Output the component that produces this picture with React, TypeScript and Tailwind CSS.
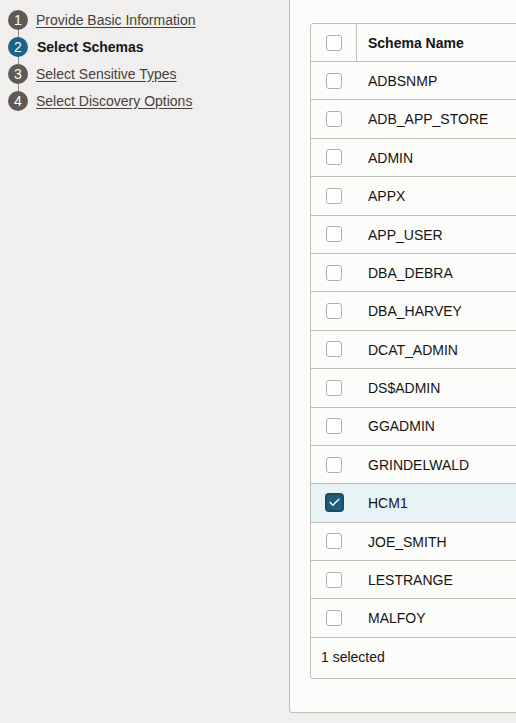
import { Check } from 'lucide-react';

const steps = [
  { n: 1, label: 'Provide Basic Information', active: false },
  { n: 2, label: 'Select Schemas', active: true },
  { n: 3, label: 'Select Sensitive Types', active: false },
  { n: 4, label: 'Select Discovery Options', active: false },
];

const schemas = [
  'ADBSNMP',
  'ADB_APP_STORE',
  'ADMIN',
  'APPX',
  'APP_USER',
  'DBA_DEBRA',
  'DBA_HARVEY',
  'DCAT_ADMIN',
  'DS$ADMIN',
  'GGADMIN',
  'GRINDELWALD',
  'HCM1',
  'JOE_SMITH',
  'LESTRANGE',
  'MALFOY',
];

const selected = ['HCM1'];

function Box({ checked }: { checked: boolean }) {
  if (checked) {
    return (
      <div className="w-[19px] h-[19px] -ml-[1.5px] rounded-[4px] bg-[#1e5f7f] border-2 border-[#174a63] flex items-center justify-center">
        <Check className="w-[13px] h-[13px] text-white" strokeWidth={2.5} />
      </div>
    );
  }
  return <div className="w-[16px] h-[16px] rounded-[3px] border border-[#b3aea8] bg-white" />;
}

export default function App() {
  return (
    <div
      className="flex h-[723px] w-[516px] overflow-hidden bg-[#f1efed] text-[14px] text-[#161513]"
      style={{ fontFamily: '"Liberation Sans", Arial, sans-serif' }}
    >
      <div className="w-[289px] shrink-0 pt-[6.5px] relative">
        <div className="absolute left-[17.5px] top-[20px] h-[81px] w-px bg-[#8e8984]" />
        {steps.map((s) => (
          <div key={s.n} className="relative flex items-center h-[27px] pl-[8px]">
            <div
              className={`w-[20px] h-[20px] rounded-full flex items-center justify-center text-white text-[14px] ${
                s.active ? 'bg-[#1a6487]' : 'bg-[#5f5a55]'
              }`}
            >
              {s.n}
            </div>
            {s.active ? (
              <span className="ml-[9px] font-bold text-[#161513]">{s.label}</span>
            ) : (
              <span className="ml-[8px] underline underline-offset-2 text-[#46413c]">{s.label}</span>
            )}
          </div>
        ))}
      </div>

      <div className="shrink-0 w-[300px] h-[713px] bg-[#fcfcfb] border-l border-b border-[#c3bfba] rounded-bl-[3px] pl-[20px] pt-[23px]">
        <div className="w-[300px] border border-[#c3bfba] rounded-[3px] bg-[#fcfcfb]">
          <div className="flex h-[38px] border-b border-[#c3bfba]">
            <div className="w-[46px] shrink-0 border-r border-[#c3bfba] flex items-center pl-[15px]">
              <Box checked={false} />
            </div>
            <div className="flex items-center pl-[11px] pt-px font-bold">Schema Name</div>
          </div>
          {schemas.map((name) => {
            const on = selected.includes(name);
            return (
              <div
                key={name}
                className={`flex h-[38.4px] border-b border-[#c3bfba] ${on ? 'bg-[#e7f2f5]' : ''}`}
              >
                <div className="w-[47px] shrink-0 flex items-center pl-[15px]">
                  <Box checked={on} />
                </div>
                <div className="flex items-center pl-[10px] pt-[1.5px]">{name}</div>
              </div>
            );
          })}
          <div className="h-[40px] flex items-center pl-[10px]">{selected.length} selected</div>
        </div>
      </div>
    </div>
  );
}
